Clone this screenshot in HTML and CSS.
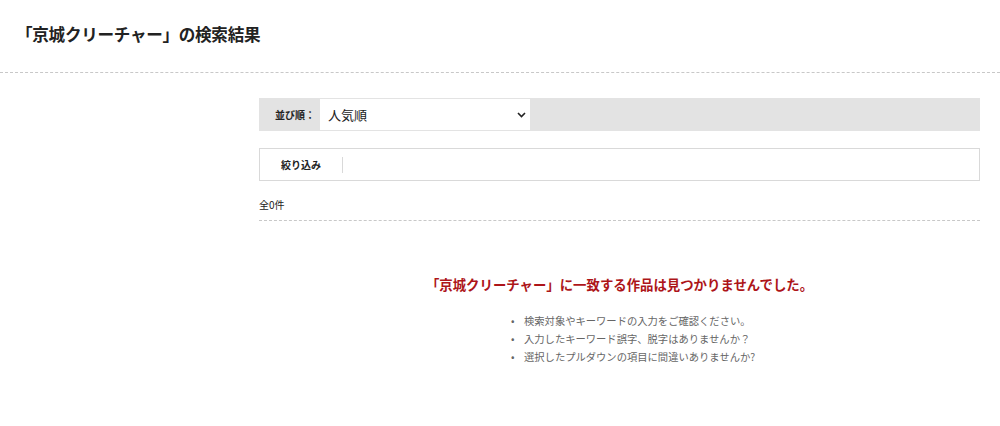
FILE: index.html
```html
<!DOCTYPE html>
<html lang="ja">

<head>
    <meta charset="UTF-8">
    <meta name="viewport" content="width=device-width, initial-scale=1.0">
    <title>検索結果</title>
    <link rel="stylesheet" href="styles.css">
</head>

<body>
    <header class="page-head">
        <h1>「京城クリーチャー」の検索結果</h1>
    </header>
    <main class="result">
        <!-- 並び順 -->
        <div class="sort-bar">
            <span class="sort-label">並び順：</span>
            <div class="sort-select">
                <span>人気順</span>
                <svg width="9" height="6" viewBox="0 0 9 6">
                    <path d="M1 1 L4.5 4.5 L8 1" fill="none" stroke="#222" stroke-width="1.6" />
                </svg>
            </div>
        </div>
        <!-- 絞り込み -->
        <div class="filter-box">
            <span class="filter-label">絞り込み</span>
        </div>
        <p class="count">全0件</p>
        <div class="empty">
            <h2>「京城クリーチャー」に一致する作品は見つかりませんでした。</h2>
            <ul>
                <li>検索対象やキーワードの入力をご確認ください。</li>
                <li>入力したキーワード誤字、脱字はありませんか？</li>
                <li>選択したプルダウンの項目に間違いありませんか?</li>
            </ul>
        </div>
    </main>
</body>

</html>
```

FILE: styles.css
```css
* {
    margin: 0;
    padding: 0;
    box-sizing: border-box;
}

body {
    font-family: "Noto Sans CJK JP", "Noto Sans", sans-serif;
    color: #222;
    background: #fff;
}

.page-head {
    height: 73px;
    border-bottom: 1px dashed #c8c8c8;
    padding: 22px 0 0 16px;
}

.page-head h1 {
    font-size: 16.6px;
    font-weight: bold;
    line-height: 24px;
    letter-spacing: -0.3px;
}

.result {
    margin-left: 259px;
    width: 721px;
    padding-top: 25px;
}

.sort-bar {
    display: flex;
    align-items: center;
    height: 33px;
    background: #e3e3e3;
    padding: 1px 0;
}

.sort-label {
    font-size: 10px;
    font-weight: bold;
    width: 61px;
    padding-left: 16px;
}

.sort-select {
    display: flex;
    align-items: center;
    justify-content: space-between;
    width: 210px;
    height: 100%;
    background: #fff;
    padding: 0 4px 0 8px;
    font-size: 13px;
}

.filter-box {
    display: flex;
    align-items: center;
    height: 33px;
    margin-top: 17px;
    border: 1px solid #d9d9d9;
}

.filter-label {
    font-size: 10px;
    font-weight: bold;
    padding: 0 21px 0 21px;
    border-right: 1px solid #d9d9d9;
    line-height: 16px;
}

.count {
    font-size: 10px;
    line-height: 14px;
    margin-top: 17px;
    padding-bottom: 8px;
    border-bottom: 1px dashed #c8c8c8;
}

.empty {
    padding-top: 53px;
}

.empty h2 {
    color: #ad1519;
    font-size: 13.4px;
    font-weight: bold;
    text-align: center;
    line-height: 20px;
}

.empty ul {
    margin: 18px 0 0 252px;
    color: #666;
    font-size: 10.3px;
    line-height: 18px;
    list-style: none;
}

.empty li::before {
    content: "•";
    display: inline-block;
    width: 13px;
}
```
